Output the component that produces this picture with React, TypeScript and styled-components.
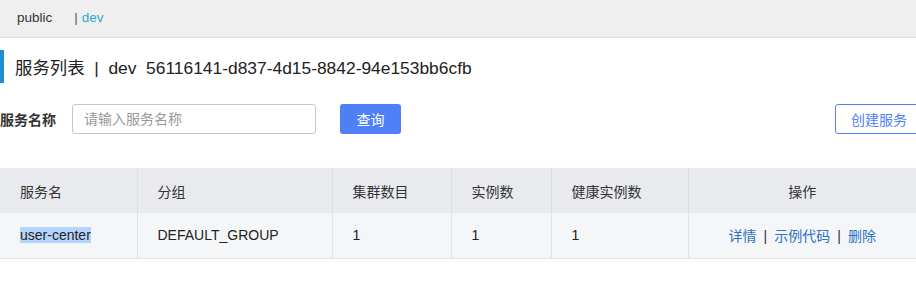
import styled, { createGlobalStyle } from "styled-components";

const GlobalStyle = createGlobalStyle`
  html, body {
    margin: 0;
    padding: 0;
    background: #fff;
    font-family: "Liberation Sans", "Noto Sans CJK SC", sans-serif;
    color: #333;
  }
`;

const rows = [
  { name: "user-center", group: "DEFAULT_GROUP", clusters: 1, instances: 1, healthy: 1 },
];

export default function App() {
  return (
    <>
      <GlobalStyle />
      <Page>
        <NamespaceBar>
          <NsItem>public</NsItem>
          <NsSep>|</NsSep>
          <NsItem active>dev</NsItem>
        </NamespaceBar>

        <TitleRow>
          <TitleText>
            服务列表 &nbsp;|&nbsp; dev&nbsp; 56116141-d837-4d15-8842-94e153bb6cfb
          </TitleText>
        </TitleRow>

        <SearchRow>
          <Label>服务名称</Label>
          <Input placeholder="请输入服务名称" />
          <PrimaryButton>查询</PrimaryButton>
          <Spacer />
          <OutlineButton>创建服务</OutlineButton>
        </SearchRow>

        <Table>
          <thead>
            <tr>
              <Th width={137}>服务名</Th>
              <Th width={195}>分组</Th>
              <Th width={119}>集群数目</Th>
              <Th width={100}>实例数</Th>
              <Th width={137}>健康实例数</Th>
              <Th center>操作</Th>
            </tr>
          </thead>
          <tbody>
            {rows.map((r) => (
              <tr key={r.name}>
                <Td>
                  <Selected>{r.name}</Selected>
                </Td>
                <Td>{r.group}</Td>
                <Td>{r.clusters}</Td>
                <Td>{r.instances}</Td>
                <Td>{r.healthy}</Td>
                <Td center>
                  <ActionLink>详情</ActionLink>
                  <ActionSep>|</ActionSep>
                  <ActionLink>示例代码</ActionLink>
                  <ActionSep>|</ActionSep>
                  <ActionLink>删除</ActionLink>
                </Td>
              </tr>
            ))}
          </tbody>
        </Table>
      </Page>
    </>
  );
}

const Page = styled.div`
  width: 916px;
  height: 285px;
  overflow: hidden;
`;

const NamespaceBar = styled.div`
  height: 36px;
  background: #efefef;
  border-bottom: 1px solid #dcdcdc;
  display: flex;
  align-items: center;
  padding-left: 17px;
  padding-bottom: 2px;
  box-sizing: border-box;
  height: 38px;
  font-size: 13.5px;
`;

const NsItem = styled.span<{ active?: boolean }>`
  color: ${(p) => (p.active ? "#2fa8d5" : "#333")};
`;

const NsSep = styled.span`
  margin: 0 4px 0 22px;
  color: #555;
`;

const TitleRow = styled.div`
  margin-top: 12px;
  height: 33px;
  border-left: 4px solid #1b8fd6;
  display: flex;
  align-items: center;
  padding-left: 11px;
`;

const TitleText = styled.span`
  font-size: 17.4px;
  color: #222;
  white-space: pre;
`;

const SearchRow = styled.div`
  margin-top: 21px;
  display: flex;
  align-items: center;
  height: 30px;
`;

const Label = styled.span`
  font-size: 14px;
  font-weight: bold;
  color: #333;
  width: 72px;
`;

const Input = styled.input`
  box-sizing: border-box;
  width: 244px;
  height: 30px;
  border: 1px solid #c4c6cf;
  border-radius: 3px;
  padding: 0 11px;
  font-size: 14px;
  font-family: inherit;
  outline: none;
  &::placeholder {
    color: #999;
  }
`;

const PrimaryButton = styled.button`
  margin-left: 24px;
  width: 61px;
  height: 30px;
  border: none;
  border-radius: 3px;
  background: #4f80f7;
  color: #fff;
  font-size: 14px;
  font-family: inherit;
`;

const Spacer = styled.div`
  flex: 1;
`;

const OutlineButton = styled.button`
  box-sizing: border-box;
  width: 86px;
  height: 30px;
  margin-right: -5px;
  border: 1px solid #4f80f7;
  border-radius: 3px;
  background: #fff;
  color: #4f80f7;
  font-size: 14px;
  font-family: inherit;
  text-align: left;
  padding-left: 15px;
`;

const Table = styled.table`
  margin-top: 34px;
  width: 100%;
  border-collapse: collapse;
  font-size: 14px;
  border-bottom: 1px solid #e3e4e8;
`;

const Th = styled.th<{ width?: number; center?: boolean }>`
  width: ${(p) => (p.width ? `${p.width}px` : "auto")};
  height: 45px;
  box-sizing: border-box;
  padding: 0 0 0 ${(p) => (p.center ? 0 : 20)}px;
  text-align: ${(p) => (p.center ? "center" : "left")};
  background: #e9eaee;
  font-weight: normal;
  color: #333;
  border-left: 1px solid #dcdee3;
  &:first-child {
    border-left: none;
  }
`;

const Td = styled.td<{ center?: boolean }>`
  height: 45px;
  box-sizing: border-box;
  padding: 0 0 0 ${(p) => (p.center ? 0 : 20)}px;
  text-align: ${(p) => (p.center ? "center" : "left")};
  background: #f5f6f8;
  color: #222;
  border-left: 1px solid #e3e4e8;
  &:first-child {
    border-left: none;
  }
`;

const Selected = styled.span`
  background: #b4d5fe;
  color: #222;
`;

const ActionLink = styled.a`
  color: #2c72c9;
`;

const ActionSep = styled.span`
  margin: 0 7px;
  color: #333;
`;
